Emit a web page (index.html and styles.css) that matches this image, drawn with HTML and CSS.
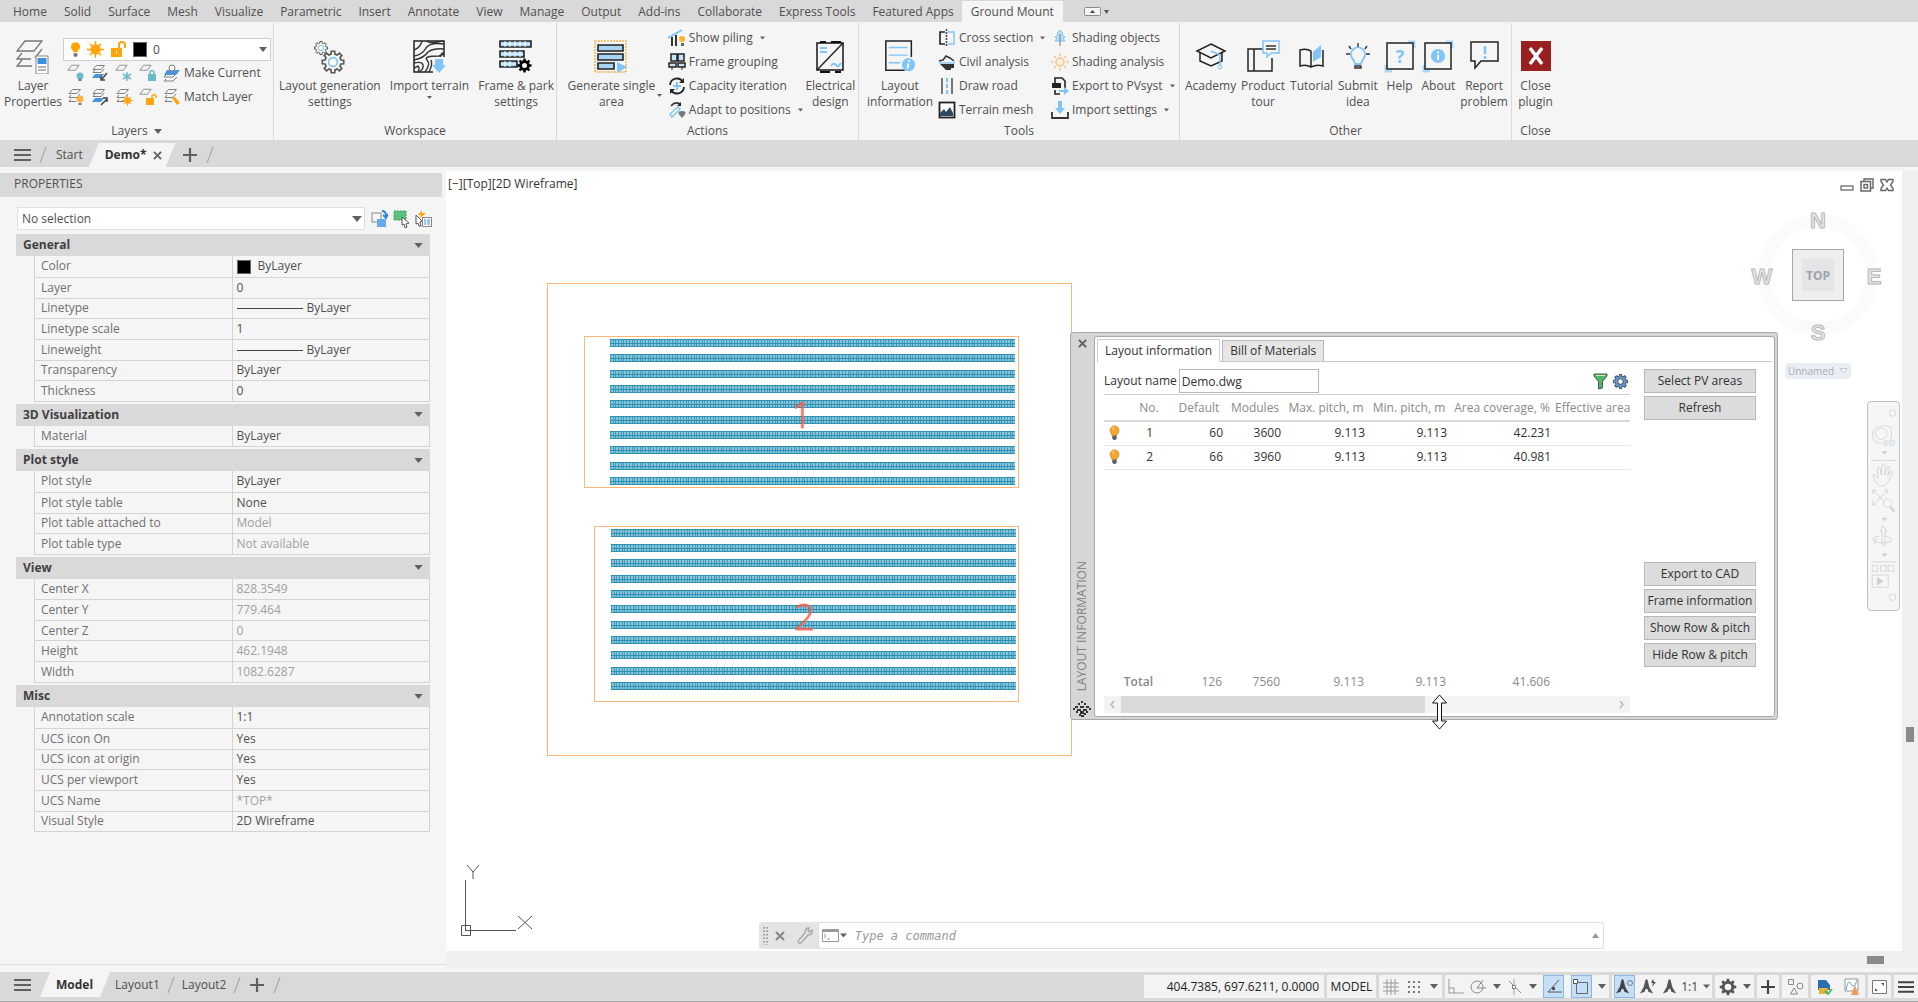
FILE: index.html
```html
<!DOCTYPE html>
<html lang="en">
<head>
<meta charset="utf-8">
<title>Demo.dwg</title>
<link rel="stylesheet" href="styles.css">
</head>
<body>
<svg class="defs" aria-hidden="true">
  <defs>
    <symbol id="gear" viewBox="-12 -12 24 24"><path d="M7.300-1.800L9.900-1.600V1.600L7.300 1.800L6.400 3.900L8.100 5.900L5.900 8.100L3.900 6.400L1.800 7.300L1.600 9.900H-1.600L-1.800 7.300L-3.900 6.400L-5.900 8.100L-8.100 5.900L-6.400 3.900L-7.300 1.800L-9.900 1.600V-1.600L-7.300-1.800L-6.400-3.900L-8.100-5.900L-5.900-8.100L-3.900-6.400L-1.800-7.300L-1.600-9.900H1.600L1.800-7.300L3.900-6.400L5.900-8.100L8.100-5.900L6.400-3.900Z"/><circle class="hub" r="4"/></symbol>
    <symbol id="stack" viewBox="0 0 18 18"><g fill="none" stroke="#808080"><path d="M5.500 1.500h8L10 5.500H2zM4 7L2 9.500h8L13 6M4 11L2 13.500h7"/></g></symbol>
    <symbol id="stackblue" viewBox="0 0 18 18"><path d="M4 10h9l-3 4H1z" fill="#4a94dc"/><g fill="none" stroke="#808080"><path d="M5.500 1.500h8L10 5.500H2zM4 6L2 8.500h8L13 5"/></g></symbol>
    <symbol id="sheet" viewBox="0 0 18 18"><path d="M5.500 1.500h9L10 7.500H1z" fill="none" stroke="#808080"/></symbol>
    <symbol id="bulb" viewBox="0 0 12 18"><path d="M6 1a5 5 0 0 1 3 9l-1 2H4L3 10a5 5 0 0 1 3-9z"/><path d="M4 13h4v3l-1 1H5l-1-1z" fill="#707070"/></symbol>
    <symbol id="sun" viewBox="0 0 18 18"><circle cx="9" cy="9" r="5"/><path d="M9 0v18M0 9h18M3 3l12 12M15 3L3 15" stroke-width="1.500"/></symbol>
    <symbol id="caret" viewBox="0 0 10 6"><path d="M0 0h10L5 6z"/></symbol>
    <symbol id="cross" viewBox="0 0 10 10"><path d="M1 1l8 8M9 1L1 9" fill="none" stroke="currentColor" stroke-width="2.200"/></symbol>
    <symbol id="plus" viewBox="0 0 14 14"><path d="M7 0v14M0 7h14" fill="none" stroke="currentColor" stroke-width="2.200"/></symbol>
    <symbol id="menu" viewBox="0 0 17 14"><path d="M0 2h17M0 7h17M0 12h17" fill="none" stroke="currentColor" stroke-width="2.200"/></symbol>
    <symbol id="slash" viewBox="0 0 8 16"><path d="M7 0L1 16" fill="none" stroke="#a8a8a8" stroke-width="1.200"/></symbol>
    <symbol id="anno" viewBox="0 0 16 16"><path d="M7 0h2l2 8 4 7-5-2-1-3H7l-1 3-5 2 4-7z"/></symbol>
    <symbol id="rowbulb" viewBox="0 0 14 18"><path d="M7 1a5 5 0 0 1 5 5c0 3-2 3-2.500 6h-5C4 9 2 9 2 6a5 5 0 0 1 5-5z" fill="#f5a72c" stroke="#c98a30"/><path d="M4 3.500q2-2 3-1.500L5 6z" fill="#ffd27a"/><path d="M4.500 12h5v3L8 17H6l-1.500-2z" fill="#606060"/></symbol>
  </defs>
</svg>

<div class="app">
  <nav class="menu" aria-label="Ribbon tabs">
    <button>Home</button><button>Solid</button><button>Surface</button><button>Mesh</button><button>Visualize</button><button>Parametric</button><button>Insert</button><button>Annotate</button><button>View</button><button>Manage</button><button>Output</button><button>Add-ins</button><button>Collaborate</button><button>Express Tools</button><button>Featured Apps</button><button class="active">Ground Mount</button>
    <button class="minimize" aria-label="Minimize ribbon"><svg width="26" height="12" viewBox="0 0 26 12"><rect x=".5" y="1.500" width="16" height="8" rx="1" fill="#f5f5f5" stroke="#8a8a8a"/><path d="M6 7h5L8.500 4z" fill="#444"/><path d="M20 4h5l-2.500 4z" fill="#555"/></svg></button>
  </nav>

  <header class="ribbon">
    <section class="group g-layers">
      <div class="tools">
        <button class="big"><svg width="34" height="34" viewBox="0 0 34 34"><g fill="none" stroke="#777" stroke-width="1.300"><path d="M9 1h17l-8 10H1zM6 13l-5 6h14M6 20l-5 6h15M19 18l7-9M20 13"/></g><rect x="20" y="16" width="12" height="18" fill="#fff" stroke="#888"/><path d="M21.500 18h9v6h-9z" fill="#3d8ee0"/><path d="M22 27h8M22 30h8" stroke="#666"/></svg><span>Layer<br>Properties</span></button>
        <div class="layerbox">
          <div class="combo">
            <svg class="use-bulb" width="11" height="17"><use href="#bulb"/></svg>
            <svg class="use-sun" width="17" height="17"><use href="#sun"/></svg>
            <svg width="17" height="17" viewBox="0 0 17 17"><path d="M1 7h11v9H1z" fill="#ffa50a"/><path d="M9 7V4a3 3 0 0 1 6 0v3" fill="none" stroke="#ffa50a" stroke-width="2"/><path d="M6 10h1v3H6z" fill="#fff"/></svg>
            <i class="swatch"></i>
            <select aria-label="Current layer"><option>0</option></select>
            <svg class="caret" width="8" height="5"><use href="#caret"/></svg>
          </div>
          <div class="layerrow">
            <button aria-label="Layer off"><svg width="18" height="18"><use href="#sheet" width="15" height="15"/><circle cx="13" cy="12" r="3.500" fill="#6cb9ca"/><path d="M11.500 15h3v2h-3z" fill="#777"/></svg></button>
            <button aria-label="Layer isolate"><svg width="18" height="18"><use href="#stackblue" width="18" height="18"/><path d="M16 9l-5 6M10 12v4h4" fill="none" stroke="#444" stroke-width="1.500"/></svg></button>
            <button aria-label="Layer freeze"><svg width="18" height="18"><use href="#sheet" width="15" height="15"/><path d="M12 8v9M8 10l8 5M16 10l-8 5" stroke="#6cb9ca" stroke-width="1.500"/></svg></button>
            <button aria-label="Layer lock"><svg width="18" height="18"><use href="#sheet" width="15" height="15"/><path d="M9 10h8v7H9z" fill="#6cb9ca"/><path d="M11 10V8q2-3 4 0v2" fill="none" stroke="#6cb9ca" stroke-width="1.500"/></svg></button>
            <button class="wide"><svg width="18" height="18" viewBox="0 0 18 18"><path d="M4 6h13l-4 5H1z" fill="#4a94dc"/><circle cx="9" cy="4" r="3" fill="#f5f5f5" stroke="#808080"/><path d="M3 11l-2 2h9l4-4M3 15l-2 2h9l4-4" fill="none" stroke="#808080"/></svg>Make Current</button>
          </div>
          <div class="layerrow">
            <button aria-label="Turn all layers on"><svg width="18" height="18"><use href="#stack" width="18" height="18"/><circle cx="13" cy="11" r="3.500" fill="#fbb53c"/><path d="M11.500 15h3v2h-3z" fill="#777"/></svg></button>
            <button aria-label="Layer unisolate"><svg width="18" height="18"><use href="#stackblue" width="18" height="18"/><path d="M10 17l6-6M12 10h4v4" fill="none" stroke="#444" stroke-width="1.500"/></svg></button>
            <button aria-label="Thaw all layers"><svg width="18" height="18"><use href="#stack" width="18" height="18"/><g class="use-sun"><use href="#sun" x="7" y="7" width="11" height="11"/></g></svg></button>
            <button aria-label="Layer unlock"><svg width="18" height="18"><use href="#sheet" width="15" height="15"/><path d="M7 10h8v7H7z" fill="#ffa50a"/><path d="M13 10V8q2-3 4 0v2" fill="none" stroke="#ffa50a" stroke-width="1.500"/></svg></button>
            <button class="wide"><svg width="18" height="18"><use href="#stack" width="18" height="18"/><path d="M9 10l3-1 5 6-3 2z" fill="#ffa50a"/></svg>Match Layer</button>
          </div>
        </div>
      </div>
      <h2>Layers <svg class="caret" width="8" height="5"><use href="#caret"/></svg></h2>
    </section>

    <section class="group g-workspace">
      <div class="tools">
        <button class="big"><svg class="outline" width="34" height="34" viewBox="0 0 34 34"><use href="#gear" x="0" y="0" width="16" height="16"/><use href="#gear" x="7" y="9" width="26" height="26"/></svg><span>Layout generation<br>settings</span></button>
        <button class="big"><svg width="32" height="34" viewBox="0 0 32 34"><rect x="1" y="1" width="30" height="31" fill="#f5f5f5" stroke="#222" stroke-width="1.500"/><g fill="none" stroke="#333" stroke-width="1.400"><path d="M1 10q6-2 8-9M1 16q8-1 12-8 4-6 18-4M14 1q2 3 16 0M1 20q10-2 14-8 6-4 16-3M1 23q8-2 9 2t-4 7M12 32q6-8 2-12t12-4l5-2M16 32q4-8 2-12M31 12q-5 3-3 6M5 32q2-4 0-6l-4 2"/></g><path d="M20 17h12v16H20z" fill="#f5f5f5"/><path d="M22 19h8v6h3l-7 8-7-8h3z" fill="#80c4f8"/></svg><span>Import terrain</span><svg class="caret" width="5" height="3"><use href="#caret"/></svg></button>
        <button class="big"><svg width="34" height="34" viewBox="0 0 34 34"><g fill="#9fd0f5" stroke="#222" stroke-width="1.600"><path d="M1 1h31v6H1zM1 11h24v6H1zM1 21h17v6H1z"/></g><path d="M6 1v6M11 1v6M16 1v6M21 1v6M26 1v6M6 11v6M11 11v6M16 11v6M21 11v6M6 21v6M11 21v6M2 4h29M2 14h22M2 24h15" stroke="#fff"/><use href="#gear" x="17" y="17" width="17" height="17"/><circle cx="25.500" cy="25.500" r="2.500" fill="#f5f5f5"/></svg><span>Frame &amp; park<br>settings</span></button>
      </div>
      <h2>Workspace</h2>
    </section>

    <section class="group g-actions">
      <div class="tools">
        <button class="big"><svg width="34" height="34" viewBox="0 0 34 34"><rect x="1" y="1" width="31" height="31" fill="none" stroke="#f8b24e" stroke-width="1.500" stroke-dasharray="2 1"/><path d="M4 5h25v6H4zM4 14h25v6H4zM4 23h16v6H4z" fill="#a9d3f3" stroke="#222" stroke-width="1.600"/><path d="M23 22l10 5-10 6z" fill="#80c4f8"/></svg><span>Generate single<br>area</span></button>
        <svg class="caret side" width="5" height="3"><use href="#caret"/></svg>
        <div class="smalls">
          <button><svg width="18" height="18" viewBox="0 0 18 18"><path d="M0 9L14 1" stroke="#80c4f8" stroke-width="2"/><path d="M4 8v9M8 6v11" stroke="#333" stroke-width="2"/><circle cx="14" cy="10" r="3" fill="#ffb234"/><path d="M13 14h3v3h-3z" fill="#666"/></svg>Show piling<svg class="caret" width="5" height="4"><use href="#caret"/></svg></button>
          <button><svg width="18" height="18" viewBox="0 0 18 18"><path d="M3 1h6v7H3zM10 1h6v7h-6zM1 10h7v4H1zM10 10h7v4h-7z" fill="#c5e2f8" stroke="#222" stroke-width="1.500"/><path d="M4 14v3M14 14v3" stroke="#222"/></svg>Frame grouping</button>
          <button><svg width="18" height="18" viewBox="0 0 18 18"><path d="M2 8a7 7 0 0 1 13-3M16 10a7 7 0 0 1-13 3" fill="none" stroke="#222" stroke-width="1.800"/><path d="M16 1v5h-5zM2 17v-5h5z" fill="#222"/><path d="M9 5v8M5 9h8" stroke="#80c4f8" stroke-width="2"/></svg>Capacity iteration</button>
          <button><svg width="18" height="18" viewBox="0 0 18 18"><path d="M3 5q4-5 9-2" fill="none" stroke="#333" stroke-width="1.500"/><path d="M13 1v4H9z" fill="#222"/><path d="M2 13l8-7 2 2-8 8z" fill="#fff" stroke="#80c4f8" stroke-width="1.500"/><path d="M14 17q-7-7 0-7t0 7z" fill="#777"/></svg>Adapt to positions<svg class="caret" width="5" height="4"><use href="#caret"/></svg></button>
        </div>
        <button class="big last"><svg width="30" height="34" viewBox="0 0 30 34"><rect x="2" y="3" width="26" height="27" fill="#f5f5f5" stroke="#222" stroke-width="1.600"/><path d="M28 3L2 30" stroke="#222" stroke-width="1.400"/><path d="M5 1h6v2H5zM16 1h10v2H16zM5 31h10v2H5zM20 31h6v2h-6z" fill="#111"/><path d="M5 8h7M5 12h7" stroke="#80c4f8" stroke-width="2"/><path d="M16 26q3-4 5-1t5-2" fill="none" stroke="#80c4f8" stroke-width="2"/></svg><span>Electrical<br>design</span></button>
      </div>
      <h2>Actions</h2>
    </section>

    <section class="group g-tools">
      <div class="tools">
        <button class="big"><svg width="34" height="36" viewBox="0 0 34 36"><path d="M22 32H2V1h27v17" fill="none" stroke="#222" stroke-width="1.600"/><path d="M5 8h20M5 16h20M5 24h12" stroke="#80c4f8" stroke-width="1.500"/><circle cx="26" cy="26" r="7" fill="#80c4f8"/><path d="M26.500 21.500v2M26 25l-1 5" stroke="#fff" stroke-width="2"/></svg><span>Layout<br>information</span></button>
        <div class="smalls">
          <button><svg width="18" height="18" viewBox="0 0 18 18"><path d="M7 3H2v12h5" fill="none" stroke="#222" stroke-width="1.600"/><path d="M10 3h6v12h-6" fill="none" stroke="#80c4f8" stroke-width="1.500"/><path d="M8.500 0v18" stroke="#444" stroke-width="1.500" stroke-dasharray="2 1"/></svg>Cross section<svg class="caret" width="5" height="4"><use href="#caret"/></svg></button>
          <button><svg width="18" height="18" viewBox="0 0 18 18"><path d="M1 8l4-1 3-4 4 2 4 3" fill="none" stroke="#333" stroke-width="1.500"/><path d="M1 9h16v2H1z" fill="#a9d3f3"/><path d="M2 11h14v4h-3v2H8l-3-3z" fill="#333"/></svg>Civil analysis</button>
          <button><svg width="18" height="18" viewBox="0 0 18 18"><path d="M4 1v16M14 1v16" stroke="#777" stroke-width="2"/><path d="M9 1v16" stroke="#80c4f8" stroke-width="2" stroke-dasharray="4 2"/></svg>Draw road</button>
          <button><svg width="18" height="18" viewBox="0 0 18 18"><rect x="1.500" y="1.500" width="15" height="15" fill="#fff" stroke="#222" stroke-width="1.800"/><path d="M2 15v-3l4-4 2 3 4-5 3 6v3z" fill="#2f4a60"/></svg>Terrain mesh</button>
        </div>
        <div class="smalls">
          <button><svg width="18" height="18" viewBox="0 0 18 18"><path d="M9 1l3 3-1 1 3 3-2 1 2 3H4l2-3-2-1 3-3-1-1z" fill="#b9def8" stroke="#80c4f8"/><path d="M9 5v12" stroke="#777"/></svg>Shading objects</button>
          <button><svg width="18" height="18" viewBox="0 0 18 18"><circle cx="9" cy="9" r="4" fill="#fdf0df" stroke="#fac58c" stroke-width="1.500"/><path d="M9 0v3M9 15v3M0 9h3M15 9h3M3 3l2 2M13 13l2 2M15 3l-2 2M5 13l-2 2" stroke="#fac58c" stroke-width="1.500"/></svg>Shading analysis</button>
          <button><svg width="18" height="18" viewBox="0 0 18 18"><path d="M4 6V1h7l3 3v7M4 13v4h5" fill="none" stroke="#222" stroke-width="1.600"/><path d="M1 6h9v5H1z" fill="#222"/><path d="M8 13h5v-3l5 4-5 4v-3H8z" fill="#80c4f8"/></svg>Export to PVsyst<svg class="caret" width="5" height="4"><use href="#caret"/></svg></button>
          <button><svg width="18" height="18" viewBox="0 0 18 18"><path d="M1 11v6h16v-6" fill="none" stroke="#333" stroke-width="1.800"/><path d="M7 0h4v7h3l-5 6-5-6h3z" fill="#80c4f8"/></svg>Import settings<svg class="caret" width="5" height="4"><use href="#caret"/></svg></button>
        </div>
      </div>
      <h2>Tools</h2>
    </section>

    <section class="group g-other">
      <div class="tools">
        <button class="big"><svg width="34" height="34" viewBox="0 0 34 34"><g fill="none" stroke="#222" stroke-width="1.500"><path d="M17 4l14 7-14 7-14-7zM6 13v8l11 5 11-5v-8"/></g><path d="M17 11l9 4v10" fill="none" stroke="#80c4f8" stroke-width="1.500"/><circle cx="26" cy="27" r="2" fill="none" stroke="#80c4f8"/></svg><span>Academy</span></button>
        <button class="big"><svg width="34" height="34" viewBox="0 0 34 34"><path d="M17 9H2v22h24V18M8 9v22" fill="none" stroke="#222" stroke-width="1.500"/><path d="M17 1h16v12h-8l-4 4v-4h-4z" fill="#f5f5f5" stroke="#80c4f8" stroke-width="1.500"/><path d="M20 6h10M20 9h10" stroke="#333" stroke-width="1.500"/></svg><span>Product<br>tour</span></button>
        <button class="big"><svg width="34" height="34" viewBox="0 0 34 34"><path d="M16 11q-5-3-11-1v16q6-2 11 1 6-3 12-1V10M16 11v16" fill="none" stroke="#222" stroke-width="1.500"/><path d="M18 12l8-7v12l-8 5z" fill="#80c4f8"/></svg><span>Tutorial</span></button>
        <button class="big"><svg width="34" height="34" viewBox="0 0 34 34"><path d="M14 24q-1-4-3-6a7 7 0 1 1 12 0q-2 2-3 6z" fill="none" stroke="#80c4f8" stroke-width="1.800"/><path d="M17 3v4M8 6l2 3M26 6l-2 3M5 14h4M25 14h4M14 26h6v2h-6z" fill="none" stroke="#333" stroke-width="1.400"/></svg><span>Submit<br>idea</span></button>
        <button class="big"><svg width="34" height="34" viewBox="0 0 34 34"><path d="M25 2h6v6M3 25v6h6" fill="none" stroke="#a9d8fa" stroke-width="3"/><rect x="4" y="3" width="26" height="26" fill="#f5f5f5" stroke="#222" stroke-width="1.500"/><text x="17" y="23" text-anchor="middle" class="glyph">?</text></svg><span>Help</span></button>
        <button class="big"><svg width="34" height="34" viewBox="0 0 34 34"><path d="M25 2h6v6M3 25v6h6" fill="none" stroke="#a9d8fa" stroke-width="3"/><rect x="4" y="3" width="26" height="26" fill="#f5f5f5" stroke="#222" stroke-width="1.500"/><circle cx="17" cy="16" r="7" fill="#80c4f8"/><path d="M17 11.500v2M17 15v5" stroke="#fff" stroke-width="2"/></svg><span>About</span></button>
        <button class="big"><svg width="34" height="34" viewBox="0 0 34 34"><path d="M4 2h27v19H14l-6 7v-7H4z" fill="none" stroke="#222" stroke-width="1.500"/><path d="M18 6v8M18 16v3" stroke="#80c4f8" stroke-width="2.500"/></svg><span>Report<br>problem</span></button>
      </div>
      <h2>Other</h2>
    </section>

    <section class="group g-close">
      <div class="tools">
        <button class="big"><svg width="32" height="34" viewBox="0 0 32 34"><rect x="1" y="1" width="30" height="30" fill="#9a1f20"/><path d="M10 8l12 16M22 8L10 24" stroke="#fff" stroke-width="3.500"/></svg><span>Close<br>plugin</span></button>
      </div>
      <h2>Close</h2>
    </section>
  </header>

  <nav class="filetabs" aria-label="Drawings">
    <button class="burger" aria-label="Menu"><svg width="17" height="14"><use href="#menu"/></svg></button>
    <svg width="8" height="16"><use href="#slash"/></svg>
    <button class="start">Start</button>
    <div class="current"><span>Demo*</span><button aria-label="Close Demo"><svg width="9" height="9"><use href="#cross"/></svg></button></div>
    <button class="add" aria-label="New drawing"><svg width="14" height="14"><use href="#plus"/></svg></button>
    <svg width="8" height="16"><use href="#slash"/></svg>
  </nav>

  <main class="work">
    <aside class="props">
      <h1>PROPERTIES</h1>
      <div class="selection">
        <div class="selwrap"><select aria-label="Selection"><option>No selection</option></select><svg class="caret" width="10" height="6"><use href="#caret"/></svg></div>
        <button aria-label="Toggle PICKADD"><svg width="17" height="18" viewBox="0 0 17 18"><rect x="1" y="3" width="9" height="9" fill="none" stroke="#888"/><path d="M6 9h9v8H6z" fill="#67aae8"/><path d="M11 1q4 0 4 5M12 5l3 3 2-4" fill="none" stroke="#2a82dc" stroke-width="1.800"/></svg></button>
        <button aria-label="Select objects"><svg width="17" height="18" viewBox="0 0 17 18"><rect x="1" y="1" width="12" height="9" fill="#5bc47c" stroke="#3f9b5e" stroke-dasharray="2 1"/><path d="M9 7l7 6-3 1 1 3-2 1-1-4-2 1z" fill="#fff" stroke="#555"/></svg></button>
        <button aria-label="Quick select"><svg width="17" height="18" viewBox="0 0 17 18"><path d="M1 5l6 6-2 1 1 4-2 0-1-3-2 1z" fill="#fff" stroke="#555"/><rect x="7.500" y="7.500" width="9" height="9" fill="#fff" stroke="#888"/><path d="M9 10h2M9 12h2M9 14h2M12 10h3M12 12h3M12 14h3" stroke="#3d8ee0"/><path d="M7 0L3 5h3L4 9l7-6H7z" fill="#ffa50a"/></svg></button>
      </div>
      <div class="sections">
        <section><h3>General<svg class="caret" width="9" height="5"><use href="#caret"/></svg></h3>
          <table><tr><th>Color</th><td><i class="swatch"></i>ByLayer</td></tr><tr><th>Layer</th><td>0</td></tr><tr><th>Linetype</th><td><i class="line"></i>ByLayer</td></tr><tr><th>Linetype scale</th><td>1</td></tr><tr><th>Lineweight</th><td><i class="line"></i>ByLayer</td></tr><tr><th>Transparency</th><td>ByLayer</td></tr><tr><th>Thickness</th><td>0</td></tr></table></section>
        <section><h3>3D Visualization<svg class="caret" width="9" height="5"><use href="#caret"/></svg></h3>
          <table><tr><th>Material</th><td>ByLayer</td></tr></table></section>
        <section><h3>Plot style<svg class="caret" width="9" height="5"><use href="#caret"/></svg></h3>
          <table><tr><th>Plot style</th><td>ByLayer</td></tr><tr><th>Plot style table</th><td>None</td></tr><tr><th>Plot table attached to</th><td class="off">Model</td></tr><tr><th>Plot table type</th><td class="off">Not available</td></tr></table></section>
        <section><h3>View<svg class="caret" width="9" height="5"><use href="#caret"/></svg></h3>
          <table><tr><th>Center X</th><td class="off">828.3549</td></tr><tr><th>Center Y</th><td class="off">779.464</td></tr><tr><th>Center Z</th><td class="off">0</td></tr><tr><th>Height</th><td class="off">462.1948</td></tr><tr><th>Width</th><td class="off">1082.6287</td></tr></table></section>
        <section><h3>Misc<svg class="caret" width="9" height="5"><use href="#caret"/></svg></h3>
          <table><tr><th>Annotation scale</th><td>1:1</td></tr><tr><th>UCS icon On</th><td>Yes</td></tr><tr><th>UCS icon at origin</th><td>Yes</td></tr><tr><th>UCS per viewport</th><td>Yes</td></tr><tr><th>UCS Name</th><td class="off">*TOP*</td></tr><tr><th>Visual Style</th><td>2D Wireframe</td></tr></table></section>
      </div>
    </aside>

    <div class="viewport">
      <div class="canvas">
        <svg class="drawing" width="100%" height="100%">
          <defs>
            <pattern id="modules" width="27" height="8" patternUnits="userSpaceOnUse">
              <rect width="27" height="8" fill="#8cc3d6"/>
              <path d="M.5 0v8M3.500 0v8M5.500 0v8M8.500 0v8M11.500 0v8M13.500 0v8M16.500 0v8M19.500 0v8M22.500 0v8M24.500 0v8" stroke="#3c9dbe"/>
              <path d="M0 .5h27M0 4.500h27M0 7.500h27" stroke="#2b91b5"/>
            </pattern>
            <rect id="strip" width="405" height="8" fill="url(#modules)"/>
          </defs>
          <g transform="translate(-446 -171)">
            <g fill="none" stroke="#fdb673">
              <rect x="547.500" y="283.500" width="524" height="472"/>
              <rect x="584.500" y="336.500" width="434" height="151"/>
              <rect x="594.500" y="526.500" width="424" height="175"/>
            </g>
            <g>
              <use href="#strip" x="610" y="339"/><use href="#strip" x="610" y="354"/><use href="#strip" x="610" y="370"/><use href="#strip" x="610" y="385"/><use href="#strip" x="610" y="400"/><use href="#strip" x="610" y="416"/><use href="#strip" x="610" y="431"/><use href="#strip" x="610" y="446"/><use href="#strip" x="610" y="462"/><use href="#strip" x="610" y="477"/>
              <use href="#strip" x="611" y="529"/><use href="#strip" x="611" y="544"/><use href="#strip" x="611" y="559"/><use href="#strip" x="611" y="575"/><use href="#strip" x="611" y="590"/><use href="#strip" x="611" y="605"/><use href="#strip" x="611" y="621"/><use href="#strip" x="611" y="636"/><use href="#strip" x="611" y="651"/><use href="#strip" x="611" y="667"/><use href="#strip" x="611" y="682"/>
            </g>
            <text class="areanum" x="791" y="428">1</text>
            <text class="areanum" x="794" y="630">2</text>
          </g>
        </svg>

        <span class="vplabel">[−][Top][2D Wireframe]</span>

        <div class="winctl">
          <button aria-label="Minimize"><svg width="14" height="14" viewBox="0 0 14 14"><rect x="1" y="8" width="12" height="4" fill="#fff" stroke="#777" stroke-width="1.400"/></svg></button>
          <button aria-label="Restore"><svg width="14" height="14" viewBox="0 0 14 14"><path d="M4 3V1h9v9h-2" fill="none" stroke="#666" stroke-width="1.400"/><rect x="1" y="3.500" width="9.500" height="9.500" fill="#fff" stroke="#666" stroke-width="1.500"/><rect x="4" y="6.500" width="3.500" height="3.500" fill="none" stroke="#666" stroke-width="1.400"/></svg></button>
          <button aria-label="Close"><svg width="14" height="14" viewBox="0 0 14 14"><path d="M1 1.500h4.500L7 4l1.500-2.500H13v2L10.500 7l2.500 3.500v2H8.500L7 10l-1.500 2.500H1v-2L3.500 7 1 3.500z" fill="#fff" stroke="#666" stroke-width="1.400"/></svg></button>
        </div>

        <div class="cube">
          <svg width="144" height="144" viewBox="0 0 144 144">
            <circle cx="72" cy="72" r="54" fill="none" stroke="#fbfbfb" stroke-width="13"/>
            <rect x="46.500" y="46.500" width="51" height="51" fill="#eee" stroke="#a5a8a8"/>
            <path d="M56 56h32v32H56z" fill="#e4e5e6"/>
            <text class="top" x="72" y="77">TOP</text>
            <g class="compass"><text x="72" y="25">N</text><text x="72" y="137">S</text><text x="16" y="81">W</text><text x="128" y="81">E</text></g>
          </svg>
          <button class="ucs">Unnamed <svg width="9" height="6" viewBox="0 0 9 6"><path d="M1 .5h7l-3.500 4z" fill="#fff" stroke="#c0c8ce"/></svg></button>
        </div>

        <div class="navbar">
          <svg width="31" height="208" viewBox="0 0 33 210" fill="none" stroke="#d4d4d4">
            <circle cx="26" cy="6" r="3.500"/><circle cx="26" cy="202" r="3.500"/>
            <path d="M14 20h7q4 0 4 5v5q0 7-7 8h-5q-8 0-8-9t9-9z"/><circle cx="14" cy="28" r="6"/>
            <text class="nav2d" x="16" y="41">2D</text>
            <path d="M15 47h5l-2.500 3z" fill="#ccc"/><path d="M4 56.500h26M4 164.500h26"/>
            <path d="M5 72q2-2 4 2l2 2-1-11q2-3 3 0l1 7 1-11q2-2 3 0v11l3-9q3-1 2 2l-2 8 4-5q3 0 1 3l-5 9q-2 4-6 4-6 0-10-12z"/>
            <path d="M5 88l16 16M21 88L5 104M5 92v-4h4M17 88h4v4M5 99v5h4"/><circle cx="21" cy="102" r="4.500" fill="#f7f7f7"/><path d="M24 106l4 5" stroke-width="2.500"/>
            <path d="M15 118h5l-2.500 3zM15 156h5l-2.500 3z" fill="#ccc"/>
            <path d="M13 132l3-6 4 6h-2v15h-3v-15zM12 137q-10 2-6 5 8 4 18 1 5-3-5-6M8 146l-2-4 5-2"/>
            <path d="M4.500 168.500h6v6h-6zM13.500 168.500h6v6h-6zM21.500 168.500h6v6h-6zM4.500 178.500h17v13h-17z"/><path d="M10 181l6 4-6 4z" fill="#ccc"/>
          </svg>
        </div>

        <svg class="ucsicon" width="80" height="80" viewBox="0 0 80 80"><path d="M11.500 72V21M12 71.500h50M7.500 66.500h9v10h-9zM13 6l6 7v7M25 6l-6 7M64 57l14 13M78 57L64 70" fill="none" stroke="#555"/></svg>

        <div class="command">
          <svg width="5" height="20" viewBox="0 0 5 20"><path d="M1 1v18M4 1v18" stroke="#888" stroke-width="1.500" stroke-dasharray="1.500 2"/></svg>
          <button aria-label="Close command line"><svg width="10" height="10"><use href="#cross"/></svg></button>
          <button aria-label="Customize"><svg width="16" height="17" viewBox="0 0 16 17"><path d="M12 1q-4 0-4 5L1 14q0 3 3 2l7-8q5 0 4-5l-3 2-1-1z" fill="none" stroke="#a5a5a5" stroke-width="1.300"/></svg></button>
          <div class="cmdinput">
            <svg width="17" height="13" viewBox="0 0 17 13"><path d="M.5.500h16v12H.5z" fill="#fff" stroke="#999"/><path d="M1 1h15v2H1z" fill="#999"/><path d="M2 5l2 2-2 2M5 10h3" fill="none" stroke="#999"/></svg>
            <svg class="caret" width="7" height="5"><use href="#caret"/></svg>
            <input aria-label="Command" placeholder="Type a command">
            <svg class="up" width="7" height="5" viewBox="0 0 7 5"><path d="M0 5h7L3.500 0z" fill="#999"/></svg>
          </div>
        </div>

        <section class="palette" aria-label="Layout information">
          <div class="spine">
            <button aria-label="Close palette"><svg width="9" height="9"><use href="#cross"/></svg></button>
            <span>LAYOUT INFORMATION</span>
            <svg width="18" height="17" viewBox="0 0 18 17" fill="#333"><path d="M8 1h2v2H8zM5 3h2v2H5zM11 3h2v2h-2zM2 6h3v2H2zM7 6h4v2H7zM13 6h3v2h-3zM0 8h2v2H0zM4 9h4v2H4zM10 9h4v2h-4zM16 8h2v2h-2zM3 11h2v2H3zM7 11h4v3H7zM13 11h2v2h-2zM6 14h2v2H6zM8 15h3v2H8zM11 13h2v2h-2z"/></svg>
          </div>
          <div class="sheet">
            <div class="ptabs"><button class="on">Layout information</button><button>Bill of Materials</button></div>
            <div class="pbody">
              <div class="left">
                <div class="namerow"><label for="lname">Layout name</label><input id="lname" value="Demo.dwg">
                  <button class="first" aria-label="Filter"><svg width="15" height="17" viewBox="0 0 15 17"><path d="M1 1h13v2L9.500 8.500V15l-4 1V8.500L1 3z" fill="#52b56c" stroke="#4c5a4c"/><path d="M3 2.500h9" stroke="#d9e8b0"/></svg></button>
                  <button aria-label="Settings"><svg class="bluegear" width="17" height="17"><use href="#gear"/></svg></button></div>
                <div class="grid">
                <table>
                  <colgroup><col class="c0"><col class="c1"><col class="c2"><col class="c3"><col class="c4"><col class="c5"><col class="c6"><col class="c7"></colgroup>
                  <thead><tr><th></th><th>No.</th><th>Default</th><th>Modules</th><th>Max. pitch, m</th><th>Min. pitch, m</th><th>Area coverage, %</th><th class="eff">Effective area</th></tr></thead>
                  <tbody>
                    <tr><td><svg width="13" height="16"><use href="#rowbulb"/></svg></td><td>1</td><td>60</td><td>3600</td><td>9.113</td><td>9.113</td><td>42.231</td><td></td></tr>
                    <tr><td><svg width="13" height="16"><use href="#rowbulb"/></svg></td><td>2</td><td>66</td><td>3960</td><td>9.113</td><td>9.113</td><td>40.981</td><td></td></tr>
                  </tbody>
                </table>
                <table class="total">
                  <colgroup><col class="c0"><col class="c1"><col class="c2"><col class="c3"><col class="c4"><col class="c5"><col class="c6"><col class="c7"></colgroup>
                  <tbody><tr><th colspan="2">Total</th><td>126</td><td>7560</td><td>9.113</td><td>9.113</td><td>41.606</td><td></td></tr></tbody>
                </table>
                </div>
                <div class="hscroll"><svg width="17" height="17" viewBox="0 0 17 17"><path d="M10 5L7 8.500l3 3.500" fill="none" stroke="#b5b5b5" stroke-width="1.300"/></svg><i></i><svg width="17" height="17" viewBox="0 0 17 17"><path d="M7 5l3 3.500L7 12" fill="none" stroke="#b5b5b5" stroke-width="1.300"/></svg></div>
              </div>
              <div class="right">
                <button>Select PV areas</button><button>Refresh</button>
                <button class="push">Export to CAD</button><button>Frame information</button><button>Show Row &amp; pitch</button><button>Hide Row &amp; pitch</button>
              </div>
            </div>
          </div>
          <svg class="cursor" width="17" height="36" viewBox="0 0 17 36"><path d="M8.500 1l7 8h-5v18h5l-7 8-7-8h5V9h-5z" fill="#fff" stroke="#111"/></svg>
        </section>
      </div>
      <div class="vscroll"></div>
      <div class="cscroll"></div>
    </div>
  </main>

  <footer class="status">
    <button class="burger" aria-label="Layout menu"><svg width="17" height="14"><use href="#menu"/></svg></button>
    <button class="model">Model</button>
    <button>Layout1</button><svg width="8" height="16"><use href="#slash"/></svg>
    <button>Layout2</button><svg width="8" height="16"><use href="#slash"/></svg>
    <button class="add" aria-label="New layout"><svg width="14" height="14"><use href="#plus"/></svg></button><svg width="8" height="16"><use href="#slash"/></svg>

    <div class="tray">
      <div class="box coords">404.7385, 697.6211, 0.0000</div>
      <button class="box space">MODEL</button>
      <div class="box w63">
        <button aria-label="Grid"><svg width="16" height="16" viewBox="0 0 16 16"><path d="M4 0v16M8 0v16M12 0v16M0 4h16M0 8h16M0 12h16" stroke="#999"/></svg></button>
        <button aria-label="Snap"><svg width="14" height="14" viewBox="0 0 14 14"><path d="M1 2h13M1 7h13M1 12h13" stroke="#777" stroke-width="2" stroke-dasharray="2 3"/></svg></button>
        <svg class="caret" width="8" height="5"><use href="#caret"/></svg>
      </div>
      <div class="box w164">
        <button aria-label="Ortho"><svg width="16" height="16" viewBox="0 0 16 16"><path d="M1 0v14h15M1 9h5v5" fill="none" stroke="#999"/></svg></button>
        <button aria-label="Polar"><svg width="16" height="16" viewBox="0 0 16 16"><circle cx="7" cy="8" r="6" fill="none" stroke="#888"/><path d="M13 1L7 9h9" fill="none" stroke="#888"/></svg></button>
        <svg class="caret" width="8" height="5"><use href="#caret"/></svg>
        <button aria-label="Isodraft"><svg width="16" height="16" viewBox="0 0 16 16"><path d="M7 0v16" stroke="#7dbb8d"/><path d="M2 2l12 12" stroke="#c77"/><rect x="5.500" y="6.500" width="3" height="3" fill="#fff" stroke="#888"/></svg></button>
        <svg class="caret" width="8" height="5"><use href="#caret"/></svg>
        <button class="lit" aria-label="Object snap tracking"><svg width="16" height="16" viewBox="0 0 16 16"><path d="M13 1L2 13h14" fill="none" stroke="#555"/><path d="M6 8h3v3H6z" fill="#555"/></svg></button>
        <button class="lit" aria-label="Object snap"><svg width="16" height="16" viewBox="0 0 16 16"><path d="M3.500 3.500h11v11h-11z" fill="none" stroke="#666"/><path d="M.5.500h4v4h-4z" fill="#fff" stroke="#555"/></svg></button>
        <svg class="caret" width="8" height="5"><use href="#caret"/></svg>
      </div>
      <div class="box w100">
        <button class="lit" aria-label="Annotation visibility"><svg width="17" height="16" viewBox="0 0 17 16" fill="#444"><use href="#anno" x="-1" width="15" height="16"/><circle cx="14" cy="4" r="2.500" fill="none" stroke="#777"/></svg></button>
        <button aria-label="Auto scale"><svg width="17" height="16" viewBox="0 0 17 16" fill="#555"><use href="#anno" x="-1" width="15" height="16"/><path d="M13 0l-2 4h2l-1 4 4-5h-2z"/></svg></button>
        <button aria-label="Annotation scale icon"><svg width="15" height="16" fill="#555"><use href="#anno"/></svg></button>
        <button>1:1</button><svg class="caret" width="7" height="5"><use href="#caret"/></svg>
      </div>
      <div class="box w39"><button aria-label="Workspace"><svg class="solidgear" width="20" height="20"><use href="#gear"/></svg></button><svg class="caret" width="8" height="5"><use href="#caret"/></svg></div>
      <button class="box w22" aria-label="Monitor"><svg width="14" height="14"><use href="#plus"/></svg></button>
      <button class="box w26" aria-label="Isolate"><svg width="17" height="17" viewBox="0 0 17 17" fill="none" stroke="#888"><path d="M1.500 1.500h5v5h-5zM7 10l3.500 6h-7z"/><circle cx="13" cy="8" r="3"/></svg></button>
      <div class="box w54">
        <button aria-label="Hardware"><svg width="16" height="16" viewBox="0 0 16 16"><path d="M1 1h8l4 5v5H1z" fill="#2a6fb0"/><path d="M2 9h9v6H2z" fill="#e8b33c"/><path d="M8 12l3 3 4-5" fill="none" stroke="#4cb868" stroke-width="2"/></svg></button>
        <button aria-label="Plugin monitor"><svg width="16" height="17" viewBox="0 0 16 17"><path d="M1 1h13v12H1z" fill="#fff" stroke="#999"/><path d="M2 12q2-12 5-6t6-4" fill="none" stroke="#58a8d8"/><path d="M11 7l4 10H7z" fill="#f09a60"/></svg></button>
      </div>
      <button class="box w23" aria-label="Full screen"><svg width="15" height="14" viewBox="0 0 15 14"><path d="M.5.500h14v13H.5z" fill="#fff" stroke="#777"/><path d="M9 3h3v3zM3 8v3h3z" fill="#555"/></svg></button>
      <button class="box w24" aria-label="Customization"><svg width="16" height="14"><use href="#menu"/></svg></button>
    </div>
  </footer>
</div>
</body>
</html>
```
FILE: styles.css
```css
* { box-sizing: border-box; }

body {
  margin: 0;
  font: 12px/16px "Open Sans", "Noto Sans", sans-serif;
  color: #505050;
  background: #f5f5f5;
}

button, input, select {
  font: inherit;
  color: inherit;
  border: 0;
  padding: 0;
  margin: 0;
  background: none;
}

select { appearance: none; }
h1, h2, h3 { margin: 0; font-size: 12px; font-weight: 400; }
svg { flex: none; display: block; }
.defs { position: absolute; width: 0; height: 0; }
.caret { fill: #606060; }
.hub { fill: var(--hub, none); stroke: var(--hub-line, none); }
.swatch { background: #000; border: 1px solid #666; }

.app { display: flex; flex-direction: column; min-height: 100vh; }

/* ribbon tabs */
.menu { display: flex; height: 22px; background: #d9d9d9; padding: 1px 0 0 4px; }
.menu button { padding: 3px 8px 2px 9px; white-space: nowrap; }
.menu .active { padding: 3px 9px 2px; background: #f5f5f5; }
.menu .minimize { margin-left: 12px; }

/* ribbon */
.ribbon { display: flex; height: 118px; padding-top: 1px; background: #f5f5f5; }
.group { display: flex; flex-direction: column; border-right: 1px solid #dadada; flex: none; }
.group h2 { display: flex; justify-content: center; align-items: center; gap: 6px; height: 18px; }
.tools { display: flex; flex: 1; }
.g-layers { width: 274px; }
.g-workspace { width: 283px; }
.g-actions { width: 302px; }
.g-tools { width: 321px; }
.g-other { width: 332px; }
.g-close { width: 47px; border-right: 0; }

.big {
  display: flex;
  flex-direction: column;
  align-items: center;
  padding-top: 17px;
  white-space: nowrap;
}
.big > svg:first-child { height: 34px; margin-bottom: 4px; }
.big .caret { margin-top: 2px; }
.glyph { font: 700 18px "Open Sans", sans-serif; fill: #80c4f8; }
.outline { fill: #f5f5f5; stroke: #555; stroke-width: 1.5; --hub: #fff; --hub-line: #80c4f8; }

.g-layers .big { width: 62px; padding-left: 4px; }
.layerbox { flex: 1; padding: 15px 2px 0 1px; }
.combo {
  display: flex;
  align-items: center;
  gap: 6px;
  height: 23px;
  padding: 0 3px 0 6px;
  background: #fff;
  border: 1px solid #cfcfcf;
}
.combo .swatch { width: 14px; height: 15px; }
.combo select { flex: 1; }
.use-bulb { fill: #ffa50a; }
.use-sun { fill: #ffa50a; stroke: #ffa50a; }
.layerrow { display: flex; align-items: center; gap: 6px; height: 24px; padding-left: 4px; }
.layerrow .wide { display: flex; align-items: center; gap: 3px; }

.g-workspace .tools { justify-content: space-between; padding: 0 2px 0 5px; }
.g-actions .tools { padding: 0 0 0 9px; }
.g-actions .big { width: 92px; }
.g-actions .last { width: 56px; margin-left: auto; }
.side { align-self: flex-start; margin: 71px 6px 0 0; }
.smalls { display: flex; flex-direction: column; padding-top: 3px; }
.smalls button { display: flex; align-items: center; gap: 3px; height: 24px; white-space: nowrap; }
.smalls .caret { margin-left: 4px; }
.g-tools .tools { padding-left: 3px; }
.g-tools .big { width: 76px; }
.g-tools .smalls { width: 113px; }
.g-other .tools { justify-content: space-between; padding: 0 3px 0 5px; }
.g-close .big { width: 100%; }

/* drawing tabs */
.filetabs { display: flex; align-items: center; height: 27px; padding: 3px 0 0 14px; background: #d9d9d9; }
.filetabs .burger { margin-right: 8px; }
.start { margin: 0 6px 0 9px; }
.current {
  display: flex;
  align-items: center;
  gap: 7px;
  height: 24px;
  padding: 0 13px 0 16px;
  background: #f5f5f5;
  clip-path: polygon(10px 0, 100% 0, calc(100% - 10px) 100%, 0 100%);
  color: #333;
  font-weight: 700;
}
.current button { color: #666; }
.add { margin: 0 9px 0 8px; color: #606060; }
.burger { color: #606060; }

/* work area */
.work { display: flex; flex: 1; padding-top: 4px; }
.props {
  width: 446px;
  padding-right: 4px;
  margin-bottom: 7px;
  border-bottom: 1px solid #dedede;
}
.props h1 { margin-top: 2px; padding: 3px 14px; height: 24px; background: #d9d9d9; }
.selection { display: flex; align-items: center; gap: 5px; padding: 10px 10px 4px 17px; }
.selwrap {
  display: flex;
  align-items: center;
  flex: 1;
  height: 23px;
  margin-right: 1px;
  padding: 0 2px 0 4px;
  background: #fff;
  border: 1px solid #e0e0e0;
}
.selwrap select { flex: 1; }
.sections { display: flex; flex-direction: column; gap: 2px; padding: 0 12px 0 16px; }
.sections h3 {
  display: flex;
  align-items: center;
  justify-content: space-between;
  height: 22px;
  padding: 0 7px;
  background: #d9d9d9;
  color: #404040;
  font-weight: 700;
}
.sections table { width: 396px; margin-left: 18px; border-collapse: collapse; table-layout: fixed; }
.sections tr { height: 21px; }
.sections tr:nth-child(3n) { height: 20px; }
.sections th, .sections td {
  padding: 0 4px;
  border: 1px solid #d4d4d4;
  font-weight: 400;
  line-height: 18px;
  text-align: left;
}
.sections th { padding-left: 6px; color: #707070; }
.sections .off { color: #a0a0a0; }
.sections tr:first-child > * { border-top: 0; }
.sections .swatch { display: inline-block; width: 14px; height: 14px; margin-right: 7px; vertical-align: middle; }
.line { display: inline-block; width: 66px; height: 1px; margin-right: 4px; background: #444; vertical-align: middle; }

/* viewport */
.viewport {
  display: grid;
  flex: 1;
  grid-template: 1fr 17px / 1fr 16px;
  margin-bottom: 4px;
  background: #efefef;
}
.canvas { position: relative; overflow: hidden; background: #fff; }
.drawing { position: absolute; inset: 0; }
.areanum { font: 300 37px "Open Sans", sans-serif; fill: #f2604a; fill-opacity: .8; stroke: #f2604a; stroke-opacity: .7; }
.vplabel { position: absolute; left: 2px; top: 5px; color: #333; }
.winctl { position: absolute; top: 7px; right: 8px; display: flex; gap: 6px; }
.vscroll { position: relative; }
.vscroll::after { content: ""; position: absolute; left: 4px; top: 556px; width: 8px; height: 15px; background: #8a8a8a; }
.cscroll { position: relative; }
.cscroll::after { content: ""; position: absolute; right: 18px; top: 5px; width: 17px; height: 8px; background: #8a8a8a; }

.cube { position: absolute; top: 32px; right: 12px; display: flex; flex-direction: column; align-items: center; gap: 16px; }
.top { font: 700 12px "Open Sans", sans-serif; fill: #a0a3a8; text-anchor: middle; }
.compass { font: 700 22px "Liberation Sans", sans-serif; fill: #e6e6e6; stroke: #b8b8b8; text-anchor: middle; }
.ucs {
  display: flex;
  align-items: center;
  gap: 5px;
  height: 16px;
  padding: 0 3px;
  border-radius: 4px;
  background: #e8eef3;
  color: #a8adb2;
  font-size: 10px;
}
.navbar { position: absolute; top: 230px; right: 2px; border: 1px solid #c0c0c0; border-radius: 4px; background: #f6f6f6; }
.nav2d { font: 700 10px "Open Sans", sans-serif; fill: #d5e2ec; stroke: none; }
.ucsicon { position: absolute; left: 8px; bottom: 12px; }

.command {
  position: absolute;
  left: 21%;
  right: 20%;
  bottom: 2px;
  display: flex;
  align-items: center;
  height: 27px;
  padding-left: 4px;
  margin: 0 7px;
  background: #e4e4e4;
  border-radius: 3px;
  color: #888;
}
.command > button { margin-left: 7px; }
.command > button + button { margin: 0 5px 0 12px; }
.cmdinput {
  display: flex;
  align-items: center;
  flex: 1;
  height: 27px;
  padding: 0 4px 0 3px;
  background: #fff;
  border: 1px solid #dedede;
  border-radius: 3px;
}
.cmdinput .caret { margin: 0 8px 0 1px; }
.cmdinput input { flex: 1; font: italic 12px "DejaVu Sans Mono", monospace; outline: 0; }
.cmdinput input::placeholder { color: #999; opacity: 1; }

/* floating palette */
.palette {
  position: absolute;
  left: 624px;
  top: 161px;
  display: flex;
  width: 708px;
  height: 388px;
  padding: 3px 2px 2px 0;
  background: #d6d6d6;
  border: 1px solid #a8a8a8;
  border-radius: 3px;
  color: #333;
}
.spine { display: flex; flex-direction: column; align-items: center; width: 23px; padding: 3px 1px 0 0; color: #606060; }
.spine span { margin-top: auto; margin-bottom: 9px; writing-mode: vertical-rl; transform: rotate(180deg); color: #808080; }
.sheet {
  display: flex;
  flex-direction: column;
  flex: 1;
  padding: 2px;
  background: #fff;
  border: 1px solid #a8a8a8;
  border-radius: 3px;
}
.ptabs { display: flex; align-items: flex-end; gap: 2px; height: 23px; border-bottom: 1px solid #c8c8c8; }
.ptabs button { height: 21px; padding: 0 7px; background: #e6e6e6; border: 1px solid #b8b8b8; border-bottom: 0; white-space: nowrap; }
.ptabs .on { height: 23px; margin-bottom: -1px; background: #fff; border-color: #d0d0d0; }
.pbody { display: flex; flex: 1; padding: 7px 16px 1px 7px; }
.left { display: flex; flex-direction: column; width: 526px; }
.namerow { display: flex; align-items: center; height: 25px; padding-right: 1px; padding-bottom: 1px; }
.namerow input { width: 140px; height: 24px; margin-left: 2px; padding: 0 2px; border: 1px solid #b8b8b8; background: #fff; }
.namerow .first { margin: 0 4px 0 auto; }
.bluegear { fill: #6ba0d8; stroke: #4a5a72; stroke-width: 1.5; --hub: #fff; --hub-line: #4a5a72; }
.solidgear { fill: #555; --hub: #f5f5f5; }
.grid { display: flex; flex-direction: column; flex: 1; overflow: hidden; border-top: 1px solid #d0d0d0; }
.grid table { width: 560px; flex: none; border-collapse: collapse; table-layout: fixed; white-space: nowrap; }
.c0 { width: 22px; } .c1 { width: 46px; } .c2 { width: 54px; } .c3 { width: 58px; }
.c4 { width: 84px; } .c5 { width: 82px; } .c6 { width: 104px; } .c7 { width: 110px; }
.grid th { padding: 0; color: #8a8a8a; font-weight: 500; }
.grid .eff { padding-left: 1px; text-align: left; }
.grid thead th { height: 26px; border-bottom: 2px solid #d8d8d8; }
.grid tbody td { height: 24px; padding: 0 3px 0 0; border-bottom: 1px solid #e6e6e6; text-align: right; }
.grid tbody td:first-child { padding-left: 4px; }
.grid td:nth-child(2) { padding-right: 19px; }
.grid .total { margin-top: auto; margin-bottom: 2px; color: #8a8a8a; }
.grid .total td { border: 0; padding-right: 4px; }
.grid .total th { text-align: right; padding-right: 19px; font-weight: 600; }
.hscroll { display: flex; justify-content: space-between; height: 17px; background: #f3f3f3; }
.hscroll i { width: 304px; margin-right: auto; background: #dadada; }
.right { display: flex; flex-direction: column; gap: 3px; width: 112px; margin-left: auto; padding-bottom: 46px; }
.right button { height: 24px; background: #dcdcdc; border: 1px solid #b8b8b8; white-space: nowrap; }
.push { margin-top: auto; }
.cursor { position: absolute; left: 360px; bottom: -11px; }

/* status bar */
.status { display: flex; align-items: center; height: 30px; padding: 0 0 4px 14px; background: #d9d9d9; border-bottom: 1px solid #a8a8a8; }
.status > button { padding: 0 7px; }
.status .burger { padding: 0; margin-right: 9px; }
.status .model {
  align-self: flex-start;
  height: 25px;
  padding: 0 17px 0 16px;
  margin-right: -2px;
  background: #f5f5f5;
  clip-path: polygon(10px 0, 100% 0, calc(100% - 10px) 100%, 0 100%);
  color: #333;
  font-weight: 700;
}
.status .add { margin: 0; padding: 0 9px; }
.tray { display: flex; gap: 3px; margin-left: auto; padding-top: 4px; color: #444; }
.box { display: flex; align-items: center; justify-content: space-around; height: 23px; background: #f3f3f3; }
.coords { width: 180px; justify-content: flex-end; padding-right: 5px; color: #222; }
.space { width: 49px; justify-content: center; color: #222; }
.lit { display: grid; place-items: center; width: 21px; height: 23px; background: #c5dff7; border: 1px solid #8ab8e6; }
.w22 { width: 22px; }
.w23 { width: 23px; }
.w24 { width: 24px; }
.w26 { width: 26px; }
.w39 { width: 39px; }
.w54 { width: 54px; }
.w63 { width: 63px; }
.w100 { width: 100px; }
.w164 { width: 164px; }
```
